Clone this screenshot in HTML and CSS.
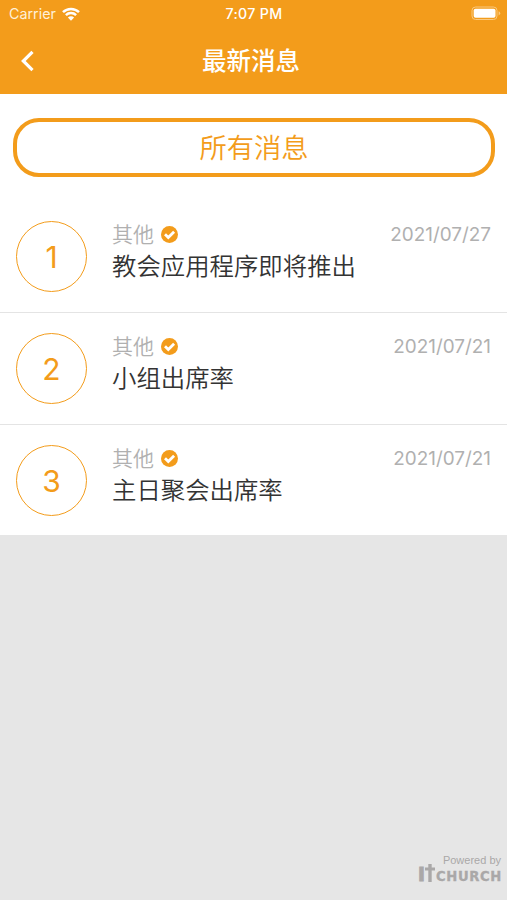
FILE: index.html
```
<!DOCTYPE html>
<html lang="zh-CN">
<head>
  <meta charset="UTF-8">
  <meta name="viewport" content="width=device-width, initial-scale=1">
  <title>最新消息</title>
  <link rel="stylesheet" href="styles.css">
</head>
<body>

  <header class="header">
    <div class="status-bar">
      <div class="carrier">
        <span>Carrier</span>
        <svg class="wifi" viewBox="0 0 18 14">
          <path d="M1 5.2a11.4 11.4 0 0 1 16 0M3.9 8.1a7.3 7.3 0 0 1 10.2 0" fill="none" stroke="#fff" stroke-width="2.5"/>
          <path d="M9 13.7L5.9 10.5a4.4 4.4 0 0 1 6.2 0z" fill="#fff"/>
        </svg>
      </div>
      <span class="clock">7:07 PM</span>
      <svg class="battery" viewBox="0 0 30 15">
        <rect x="1" y="1" width="25" height="12.5" rx="3.5" fill="none" stroke="#f9c980" stroke-width="1"/>
        <rect x="2.7" y="2.8" width="21.8" height="9" rx="1.8" fill="#fff"/>
        <path d="M27.6 5.2v4.2q1.6-.6 1.6-2.1t-1.6-2.1z" fill="#f9c980"/>
      </svg>
    </div>
    <nav class="nav-bar">
      <svg class="back" viewBox="0 0 14 22">
        <path d="M11.5 1.8L2.3 11l9.2 9.2" fill="none" stroke="#fff" stroke-width="3.2"/>
      </svg>
      <h1>最新消息</h1>
    </nav>
  </header>

  <main class="content">
    <button class="all-btn">所有消息</button>

    <div class="news-item">
      <div class="number">1</div>
      <div class="news-info">
        <div class="meta">
          <span class="category">其他</span>
          <svg class="check" viewBox="0 0 17 17"><circle cx="8.5" cy="8.5" r="8.5" fill="#f39c1b"/><path d="M4 8.3l3.3 3.3 5.8-5.8" fill="none" stroke="#fff" stroke-width="2.8"/></svg>
          <span class="date">2021/07/27</span>
        </div>
        <div class="news-title">教会应用程序即将推出</div>
      </div>
    </div>

    <div class="news-item">
      <div class="number">2</div>
      <div class="news-info">
        <div class="meta">
          <span class="category">其他</span>
          <svg class="check" viewBox="0 0 17 17"><circle cx="8.5" cy="8.5" r="8.5" fill="#f39c1b"/><path d="M4 8.3l3.3 3.3 5.8-5.8" fill="none" stroke="#fff" stroke-width="2.8"/></svg>
          <span class="date">2021/07/21</span>
        </div>
        <div class="news-title">小组出席率</div>
      </div>
    </div>

    <div class="news-item">
      <div class="number">3</div>
      <div class="news-info">
        <div class="meta">
          <span class="category">其他</span>
          <svg class="check" viewBox="0 0 17 17"><circle cx="8.5" cy="8.5" r="8.5" fill="#f39c1b"/><path d="M4 8.3l3.3 3.3 5.8-5.8" fill="none" stroke="#fff" stroke-width="2.8"/></svg>
          <span class="date">2021/07/21</span>
        </div>
        <div class="news-title">主日聚会出席率</div>
      </div>
    </div>
  </main>

  <footer class="footer">
    <div class="powered">Powered by</div>
    <div class="brand">
      <span class="brand-i">I</span>
      <svg class="cross" viewBox="0 0 10 18"><path d="M3.3 0h3.4v3.4H10v3H6.7V18H3.3V6.4H0v-3h3.3z" fill="#aaa8a8"/></svg>
      <span class="brand-name">CHURCH</span>
    </div>
  </footer>

</body>
</html>
```
FILE: styles.css
```
* { box-sizing: border-box; }
body {
  margin: 0;
  min-height: 900px;
  display: flex;
  flex-direction: column;
  background: #e6e6e6;
  font-family: 'Inter', 'Noto Sans CJK SC', sans-serif;
  color: #333;
}
.header {
  height: 94px;
  background: #f39c1b;
  color: #fff;
}
.status-bar {
  height: 27px;
  padding: 0 6px 0 9px;
  display: grid;
  grid-template-columns: 1fr auto 1fr;
  align-items: center;
}
.carrier {
  display: flex;
  align-items: center;
  gap: 6px;
  color: #fff0d8;
  font-size: 14.3px;
}
.wifi {
  width: 18px;
  height: 14px;
}
.clock {
  margin-right: 2px;
  font-size: 14.2px;
  letter-spacing: 0.3px;
  font-weight: 500;
}
.battery {
  width: 30px;
  height: 15px;
  justify-self: end;
}
.nav-bar {
  height: 67px;
  padding: 0 21px;
  display: grid;
  grid-template-columns: 14px 1fr 19px;
  align-items: center;
}
.back {
  width: 14px;
  height: 22px;
}
.nav-bar h1 {
  margin: 0;
  font-size: 24.5px;
  line-height: 36px;
  font-weight: 500;
  text-align: center;
}
.content {
  background: #fff;
  padding-top: 24px;
}
.all-btn {
  display: block;
  width: 482px;
  height: 59px;
  margin: 0 0 24.4px 13px;
  padding: 2px 0 0;
  background: #fff;
  border: 4px solid #f39c1b;
  border-radius: 26px;
  color: #f39c1b;
  font-family: inherit;
  font-size: 27.3px;
  font-weight: 350;
  line-height: 49px;
}
.news-item {
  height: 111.6px;
  padding: 20px 16px 0;
  display: flex;
  gap: 25px;
  border-bottom: 1px solid #e4e4e4;
}
.news-item:last-child {
  height: 110.4px;
  border-bottom: none;
}
.number {
  width: 71px;
  height: 71px;
  border: 1px solid #f39c1b;
  border-radius: 50%;
  color: #f39c1b;
  font-size: 30px;
  line-height: 70px;
  text-align: center;
}
.news-info {
  flex: 1;
}
.meta {
  height: 28px;
  display: flex;
  align-items: center;
  color: #b0b0b0;
}
.category {
  font-size: 21px;
  line-height: 28px;
  font-weight: 350;
}
.check {
  width: 17px;
  height: 17px;
  margin: -1px 0 0 7px;
}
.date {
  margin: -1px 0 0 auto;
  font-size: 18.9px;
}
.news-title {
  font-size: 24.4px;
  line-height: 34px;
  font-weight: 350;
}
.footer {
  margin-top: auto;
  padding: 0 6px 18px;
  display: flex;
  flex-direction: column;
  align-items: flex-end;
  color: #aaa8a8;
}
.powered {
  font-family: 'Liberation Sans', sans-serif;
  font-size: 11px;
  line-height: 12px;
  margin-bottom: -2px;
}
.brand {
  height: 18px;
  display: flex;
  align-items: flex-end;
  font-family: 'DejaVu Sans', sans-serif;
  font-weight: bold;
}
.brand-i {
  font-size: 20px;
  line-height: 15px;
  -webkit-text-stroke: 0.8px #aaa8a8;
}
.cross {
  width: 10px;
  height: 18px;
  margin-right: 1px;
}
.brand-name {
  font-size: 13.2px;
  line-height: 10px;
  letter-spacing: 0.6px;
  margin-right: -1px;
  -webkit-text-stroke: 0.3px #aaa8a8;
}
```
